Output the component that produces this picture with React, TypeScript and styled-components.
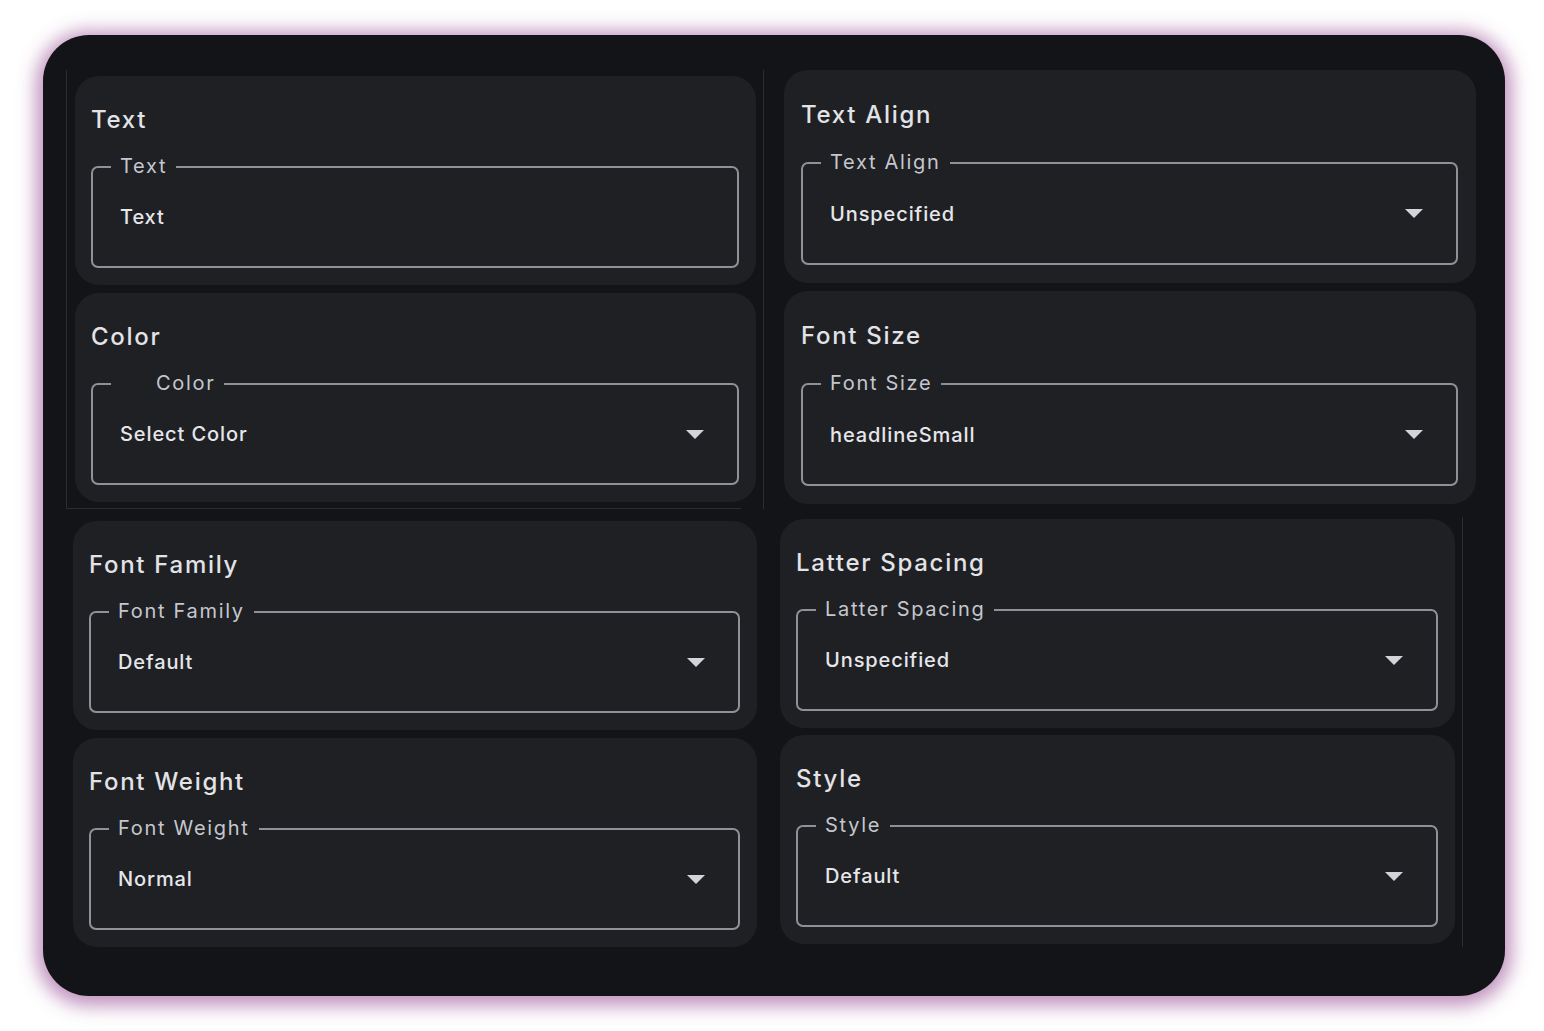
import React from "react";
import styled, { createGlobalStyle } from "styled-components";

const Global = createGlobalStyle`
  html, body { margin: 0; padding: 0; background: #ffffff; }
  body { font-family: Inter, "Noto Sans", sans-serif; -webkit-font-smoothing: antialiased; }
`;

const Page = styled.div`
  width: 1544px;
  height: 1031px;
  padding: 35px 39px 35px 43px;
  box-sizing: border-box;
`;

const Panel = styled.div`
  width: 1462px;
  height: 961px;
  box-sizing: border-box;
  background: #131418;
  border-radius: 46px;
  box-shadow: 0 3px 18px 7px rgba(186, 136, 184, 0.9);
  padding: 35px 28px 48px 23px;
  display: grid;
  grid-template-columns: 697px 714px;
  grid-template-rows: 439px 439px;
`;

type GroupProps = {
  $pl: number;
  $pt: number;
  $cardW: number;
  $gap: number;
  $left?: boolean;
  $right?: boolean;
  $bottom?: boolean;
  $w?: number;
};

const Group = styled.div<GroupProps>`
  position: relative;
  box-sizing: border-box;
  width: ${(p) => (p.$w ? `${p.$w}px` : "auto")};
  padding-left: ${(p) => p.$pl}px;
  padding-top: ${(p) => p.$pt}px;
  display: flex;
  flex-direction: column;
  gap: ${(p) => p.$gap}px;
  border-left: ${(p) => (p.$left ? "1px solid #2b2d32" : "none")};
  & > * {
    width: ${(p) => p.$cardW}px;
  }
  ${(p) =>
    p.$bottom
      ? `&::after {
          content: "";
          position: absolute;
          left: 0;
          bottom: 0;
          width: 674px;
          height: 1px;
          background: #2b2d32;
        }`
      : ""}
  ${(p) =>
    p.$right
      ? `&::before {
          content: "";
          position: absolute;
          right: 0;
          top: 8px;
          height: 430px;
          width: 1px;
          background: #2b2d32;
        }`
      : ""}
`;

const Card = styled.section<{ $tall?: boolean }>`
  box-sizing: border-box;
  background: #1e2024;
  border-radius: 24px;
  padding: ${(p) => (p.$tall ? "29px 18px 18px 17px" : "28px 17px 17px 16px")};
  display: flex;
  flex-direction: column;
`;

const Title = styled.h2`
  margin: 0;
  font-family: Inter, "Noto Sans", sans-serif;
  font-size: 24px;
  line-height: 32px;
  font-weight: 500;
  letter-spacing: 1.7px;
  color: #e3e3e7;
`;

const Field = styled.div<{ $tall?: boolean }>`
  position: relative;
  margin-top: ${(p) => (p.$tall ? 31 : 30)}px;
  height: ${(p) => (p.$tall ? 103 : 102)}px;
  box-sizing: border-box;
  border: 2px solid #8e9198;
  border-radius: 7px;
  display: flex;
  align-items: center;
  padding: 0 33px 0 27px;
`;

const Label = styled.span<{ $lead?: number }>`
  position: absolute;
  top: -15px;
  left: 18px;
  padding: 0 9px 0 ${(p) => 9 + (p.$lead || 0)}px;
  background: #1e2024;
  font-size: 20px;
  line-height: 26px;
  font-weight: 400;
  letter-spacing: 1.7px;
  color: #c5c7ce;
`;

const Value = styled.span`
  flex: 1;
  font-size: 20px;
  line-height: 28px;
  font-weight: 500;
  letter-spacing: 0.9px;
  color: #e6e6ea;
`;

const Arrow = styled.svg`
  width: 18px;
  height: 9px;
  flex: none;
  fill: #d2d4da;
`;

type Item = { title: string; label: string; value: string; select: boolean; lead?: number };

const CardView = ({ item, tall }: { item: Item; tall?: boolean }) => (
  <Card $tall={tall}>
    <Title>{item.title}</Title>
    <Field $tall={tall}>
      <Label $lead={item.lead}>{item.label}</Label>
      <Value>{item.value}</Value>
      {item.select && (
        <Arrow viewBox="7 10 10 5" preserveAspectRatio="none">
          <path d="M7 10l5 5 5-5z" />
        </Arrow>
      )}
    </Field>
  </Card>
);

const topLeft: Item[] = [
  { title: "Text", label: "Text", value: "Text", select: false },
  { title: "Color", label: "Color", value: "Select Color", select: true, lead: 36 },
];
const topRight: Item[] = [
  { title: "Text Align", label: "Text Align", value: "Unspecified", select: true },
  { title: "Font Size", label: "Font Size", value: "headlineSmall", select: true },
];
const bottomLeft: Item[] = [
  { title: "Font Family", label: "Font Family", value: "Default", select: true },
  { title: "Font Weight", label: "Font Weight", value: "Normal", select: true },
];
const bottomRight: Item[] = [
  { title: "Latter Spacing", label: "Latter Spacing", value: "Unspecified", select: true },
  { title: "Style", label: "Style", value: "Default", select: true },
];

export default function App() {
  return (
    <>
      <Global />
      <Page>
        <Panel>
          <Group $pl={8} $pt={6} $cardW={681} $gap={8} $left $bottom>
            {topLeft.map((it) => (
              <CardView key={it.title} item={it} />
            ))}
          </Group>
          <Group $pl={20} $pt={0} $cardW={692} $gap={8} $left>
            {topRight.map((it) => (
              <CardView key={it.title} item={it} tall />
            ))}
          </Group>
          <Group $pl={7} $pt={12} $cardW={684} $gap={8}>
            {bottomLeft.map((it) => (
              <CardView key={it.title} item={it} />
            ))}
          </Group>
          <Group $pl={17} $pt={10} $cardW={675} $gap={7} $right $w={700}>
            {bottomRight.map((it) => (
              <CardView key={it.title} item={it} />
            ))}
          </Group>
        </Panel>
      </Page>
    </>
  );
}
